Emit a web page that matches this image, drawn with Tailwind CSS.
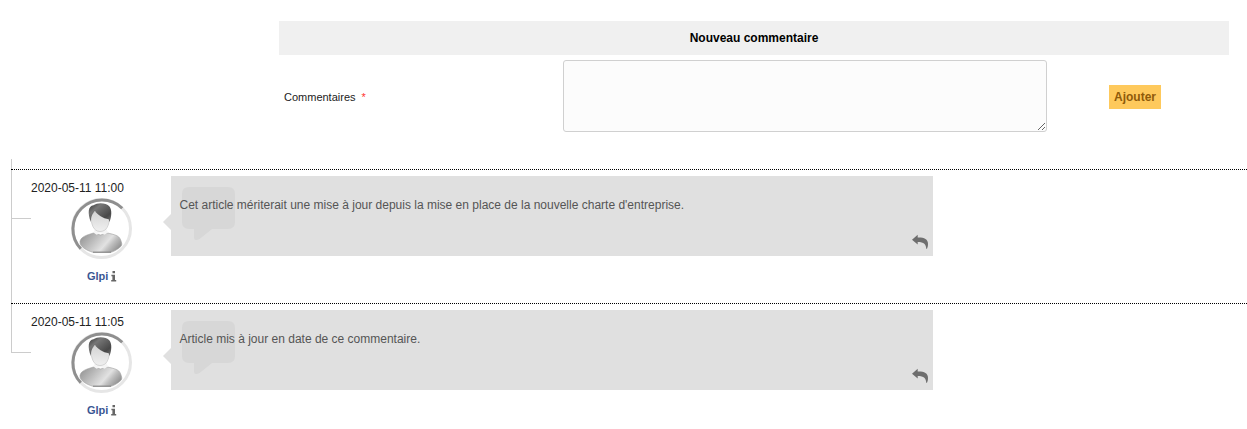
<!DOCTYPE html>
<html lang="fr">
<head>
<meta charset="utf-8">
<title>Commentaires</title>
<script src="https://cdn.jsdelivr.net/npm/@tailwindcss/browser@4"></script>
</head>
<body class="h-[429px] overflow-hidden bg-white text-[12px] text-[#222]" style="font-family:'Liberation Sans',Arial,sans-serif">
<svg class="absolute h-0 w-0" aria-hidden="true">
  <defs>
    <linearGradient id="hair" x1="0" y1="0" x2="1" y2="1"><stop offset="0" stop-color="#333"/><stop offset=".3" stop-color="#777"/><stop offset=".75" stop-color="#484848"/><stop offset="1" stop-color="#777"/></linearGradient>
    <linearGradient id="face" x1="0" y1="0" x2="0" y2="1"><stop offset="0" stop-color="#cfcfcf"/><stop offset="1" stop-color="#f0f0f0"/></linearGradient>
    <linearGradient id="torso" x1="0" y1=".3" x2="1" y2=".7"><stop offset="0" stop-color="#999"/><stop offset=".3" stop-color="#bcbcbc"/><stop offset=".62" stop-color="#e2e2e2"/><stop offset=".75" stop-color="#c0c0c0"/><stop offset="1" stop-color="#8c8c8c"/></linearGradient>
    <symbol id="avatar" viewBox="0 0 61 61">
      <circle cx="30.5" cy="30.5" r="29" fill="#fff" stroke="#e6e6e6" stroke-width="3"/>
      <path d="M51.2 10.2A29 29 0 0 0 9.800 50.800" fill="none" stroke="#8f8f8f" stroke-width="3"/>
      <path d="M9 43.500C10 38.500 16 37 22.500 35L29.500 37L36.500 35C43 36.500 48 37.500 49.500 41.500C50.500 44.500 51.500 46.500 50 48.300C46.500 51.500 43.500 53.200 40 54.300H22C16 52.500 8.500 49 9 43.500Z" fill="url(#torso)" stroke="#a0a0a0" stroke-width=".6"/>
      <path d="M22 54.200H40" stroke="#777" stroke-width=".9"/>
      <path d="M24 31H35.500L37 34.500L33.500 36.800L29.500 35L25.500 36.800L22.500 34.500Z" fill="#f5f5f5"/>
      <path d="M19.800 17C19.800 26 22.500 33.500 29 33.500C35.500 33.500 38.200 28 38.800 18L30 10Z" fill="url(#face)" stroke="#b5b5b5" stroke-width=".5"/>
      <path d="M19.800 24C16.500 15 17 8 22.500 7.300C26.500 4.200 35 4.500 38.500 8.500C41.200 12 40.600 19 38.500 24L37.700 21.300C32 20.300 26.500 17 24 13C21.500 15.500 20 18 19.800 24Z" fill="url(#hair)"/>
    </symbol>
    <symbol id="info" viewBox="0 0 6 11">
      <path d="M1.500 0H4V2.300H1.500ZM.4 3.800H4V9H5.200V10.600H.2V9H1.400V5.300H.4Z" fill="#666"/>
    </symbol>
    <symbol id="reply" viewBox="0 0 17 16">
      <path d="M0 5.700L5.700 .8V3.600C12 3.400 16 5.200 16 9.800C16 11.800 15.700 13.300 15 14.800H14.200C14.200 10.500 12 8 5.700 8V10.500Z" fill="#6e6e6e"/>
    </symbol>
    <symbol id="speech" viewBox="0 0 53 54">
      <path d="M7 0H46Q53 0 53 7V35Q53 42 46 42H30L17.500 52Q12 54.500 12 51V42H7Q0 42 0 35V7Q0 0 7 0Z" fill="#d7d7d7"/>
    </symbol>
  </defs>
</svg>

<form class="ml-[279px] w-[950px] pt-[21px]">
  <h2 class="flex h-[34px] items-center justify-center bg-[#f0f0f0] font-bold text-black">Nouveau commentaire</h2>
  <div class="mt-[5px] flex h-[72px] items-center">
    <label for="c" class="w-[284px] pt-[3px] pl-[5px] text-[11px]">Commentaires <span class="ml-[3px] text-[#f33]">*</span></label>
    <textarea id="c" class="block h-[72px] w-[484px] resize rounded-[3px] border border-[#d0d0d0] bg-[#fcfcfc]"></textarea>
    <button type="button" class="mt-[2px] ml-[62px] h-[24px] w-[52px] bg-[#fec95c] text-center font-bold text-[#8f5a0a]">Ajouter</button>
  </div>
</form>

<ul class="mt-[27px] ml-[11px]">
  <li class="h-[10px] border-l border-[#ccc]"></li>
  <li class="relative flex h-[134px] border-t border-dotted border-black">
    <div class="absolute top-0 left-0 h-[133px] w-px bg-[#ccc]"></div>
    <div class="absolute top-[48px] left-0 h-px w-[20px] bg-[#ccc]"></div>
    <div class="flex w-[160px] shrink-0 flex-col pt-[10px] pl-[20px]">
      <time class="h-[18px] leading-[16px]">2020-05-11 11:00</time>
      <svg class="ml-[40px] h-[61px] w-[61px]"><use href="#avatar"/></svg>
      <div class="mt-[9px] ml-[56px] flex h-[16px] items-center text-[11px] font-bold text-[#3a5693]">Glpi<svg class="ml-[3px] h-[11px] w-[6px]"><use href="#info"/></svg></div>
    </div>
    <div class="relative mt-[6px] h-[80px] w-[762px] bg-[#e0e0e0] pt-[21px] pl-[8.5px] leading-[16px] text-[#555]">
      <div class="absolute top-[38px] left-[-8px] h-[16px] w-[8px] bg-[#e0e0e0] [clip-path:polygon(100%_0,0_50%,100%_100%)]"></div>
      <svg class="absolute top-[11px] left-[10.5px] h-[54px] w-[53px]"><use href="#speech"/></svg>
      <p class="relative">Cet article mériterait une mise à jour depuis la mise en place de la nouvelle charte d'entreprise.</p>
      <svg class="absolute right-[4px] bottom-[6px] h-[16px] w-[17px]"><use href="#reply"/></svg>
    </div>
  </li>
  <li class="relative flex h-[126px] border-t border-dotted border-black">
    <div class="absolute top-0 left-0 h-[49px] w-[20px] border-b border-l border-[#ccc]"></div>
    <div class="flex w-[160px] shrink-0 flex-col pt-[10px] pl-[20px]">
      <time class="h-[18px] leading-[16px]">2020-05-11 11:05</time>
      <svg class="ml-[40px] h-[61px] w-[61px]"><use href="#avatar"/></svg>
      <div class="mt-[9px] ml-[56px] flex h-[16px] items-center text-[11px] font-bold text-[#3a5693]">Glpi<svg class="ml-[3px] h-[11px] w-[6px]"><use href="#info"/></svg></div>
    </div>
    <div class="relative mt-[6px] h-[80px] w-[762px] bg-[#e0e0e0] pt-[21px] pl-[8.5px] leading-[16px] text-[#555]">
      <div class="absolute top-[38px] left-[-8px] h-[16px] w-[8px] bg-[#e0e0e0] [clip-path:polygon(100%_0,0_50%,100%_100%)]"></div>
      <svg class="absolute top-[11px] left-[10.5px] h-[54px] w-[53px]"><use href="#speech"/></svg>
      <p class="relative">Article mis à jour en date de ce commentaire.</p>
      <svg class="absolute right-[4px] bottom-[6px] h-[16px] w-[17px]"><use href="#reply"/></svg>
    </div>
  </li>
</ul>
</body>
</html>
